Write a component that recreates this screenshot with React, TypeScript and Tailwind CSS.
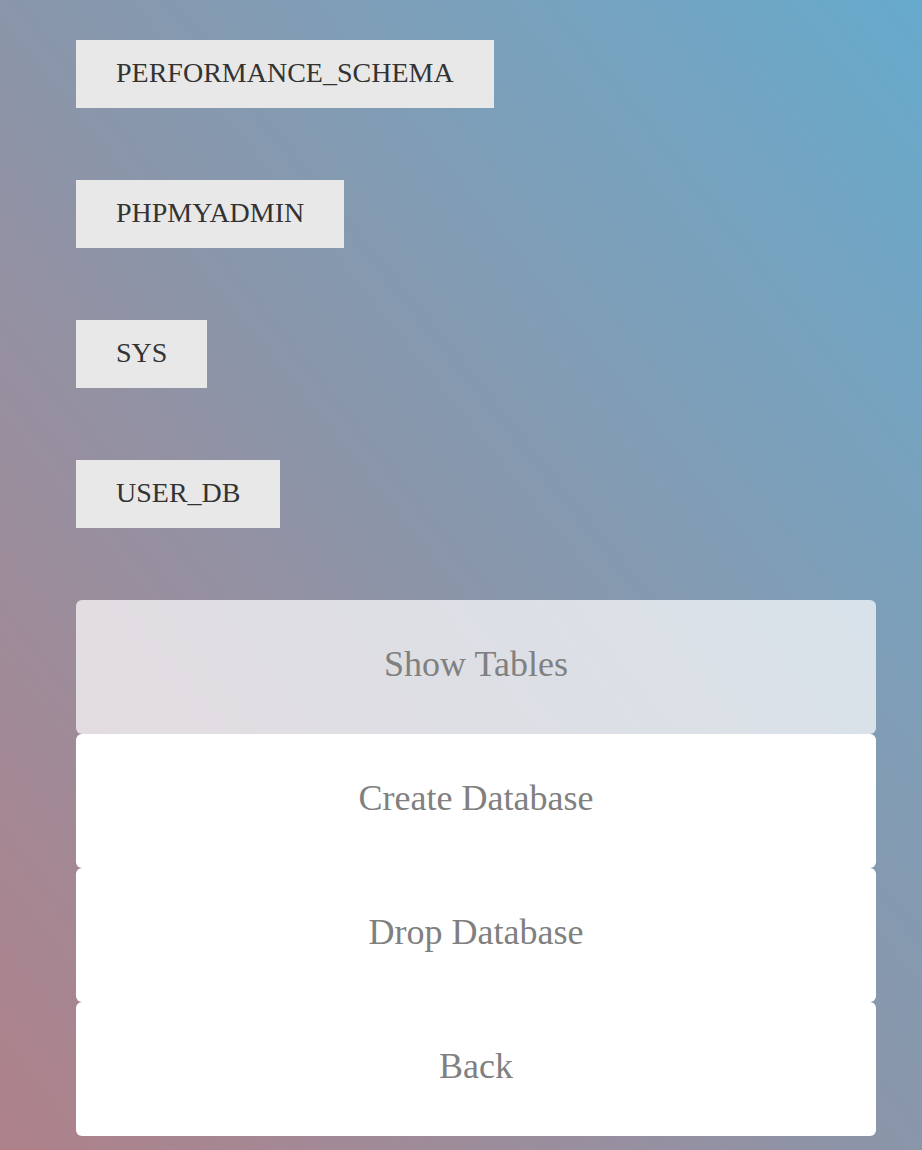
const DATABASES = ['PERFORMANCE_SCHEMA', 'PHPMYADMIN', 'SYS', 'USER_DB'];

const ACTIONS = [
  { label: 'Show Tables', active: true },
  { label: 'Create Database', active: false },
  { label: 'Drop Database', active: false },
  { label: 'Back', active: false },
];

export default function App() {
  return (
    <div
      className="min-h-[1150px] w-full bg-gradient-to-tr from-[#ae818a] via-[#8a96aa] to-[#66aacc] px-[76px] pt-[40px] pb-[14px]"
      style={{ fontFamily: '"Liberation Serif", "Times New Roman", serif' }}
    >
      {/* Database list */}
      <div className="flex flex-col items-start gap-[72px]">
        {DATABASES.map((db) => (
          <button
            key={db}
            className="h-[68px] bg-[#e8e8e8] px-[40px] pb-[2px] text-[28px] leading-[66px] text-[#333333]"
          >
            {db}
          </button>
        ))}
      </div>

      {/* Actions */}
      <div className="mt-[72px] flex w-[800px] flex-col">
        {ACTIONS.map((a) => (
          <button
            key={a.label}
            className={`h-[134px] w-full rounded-[6px] pb-[6px] text-[36px] text-[#808080] ${
              a.active ? 'bg-white/70' : 'bg-white'
            }`}
          >
            {a.label}
          </button>
        ))}
      </div>
    </div>
  );
}
